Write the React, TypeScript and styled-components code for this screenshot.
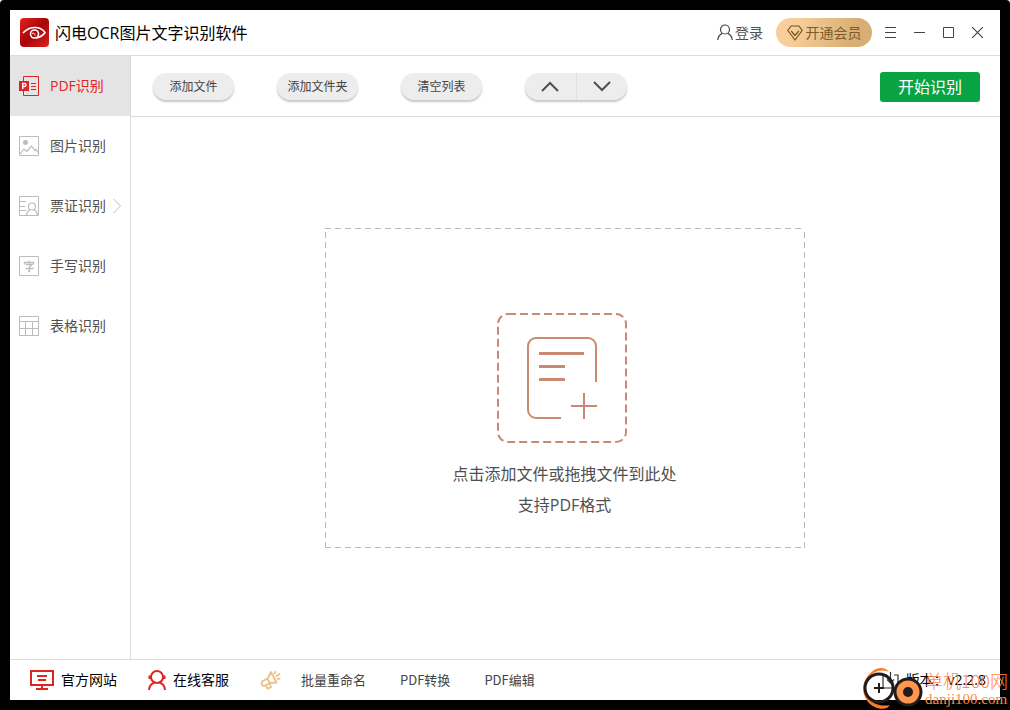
import React from "react";
import styled, { createGlobalStyle } from "styled-components";

const GlobalStyle = createGlobalStyle`
  *, *::before, *::after { box-sizing: border-box; }
  body { margin: 0; background: #fff; }
  body, button {
    font-family: "Open Sans", "Noto Sans CJK SC", sans-serif;
    font-weight: 400;
  }
  button {
    margin: 0; padding: 0; border: 0; background: none; color: inherit; cursor: pointer;
  }
  svg { display: block; flex: none; }
`;

const Frame = styled.div`
  display: flex;
  min-height: 100vh;
  padding: 10px;
  background: #000;
  border-radius: 4px 4px 0 0;
`;

const AppWindow = styled.div`
  position: relative;
  display: flex;
  flex: 1;
  flex-direction: column;
  background: #fff;
`;

const TitleBar = styled.header`
  display: flex;
  align-items: center;
  height: 46px;
  padding: 0 14px 0 10px;
  border-bottom: 1px solid #dcdcdc;
`;

const Title = styled.h1`
  flex: 1;
  margin: 0 0 0 6px;
  color: #000;
  font-size: 16px;
  font-weight: 400;
  line-height: 24px;
`;

const LoginButton = styled.button`
  display: flex;
  align-items: center;
  gap: 2px;
  color: #505050;
  font-size: 14px;
  line-height: 20px;
`;

const VipButton = styled.button`
  display: flex;
  align-items: center;
  justify-content: center;
  gap: 3px;
  width: 96px;
  height: 29px;
  margin: 0 10px 0 13px;
  border-radius: 15px;
  background: linear-gradient(110deg, #f8cf9b 20%, #d8ae74 80%);
  color: #7d5a29;
  font-size: 14px;
  line-height: 20px;
`;

const WindowControls = styled.div`
  display: flex;
  gap: 12px;
`;

const ControlButton = styled.button`
  display: flex;
  align-items: center;
  justify-content: center;
  width: 17px;
  height: 20px;
  color: #444;
`;

const Body = styled.div`
  display: flex;
  flex: 1;
`;

const Sidebar = styled.nav`
  width: 121px;
  border-right: 1px solid #dcdcdc;
`;

const NavItem = styled.button<{ $active?: boolean }>`
  display: flex;
  align-items: center;
  width: 100%;
  height: 60px;
  padding-left: 8px;
  background: ${(p) => (p.$active ? "#e4e4e4" : "transparent")};
  color: ${(p) => (p.$active ? "#e02420" : "#505050")};
  font-size: 14px;
  line-height: 20px;
`;

const NavLabel = styled.span`
  margin: 0 7px 0 10px;
  white-space: nowrap;
`;

const Content = styled.div`
  display: flex;
  flex: 1;
  flex-direction: column;
`;

const Toolbar = styled.div`
  display: flex;
  align-items: center;
  gap: 43px;
  height: 61px;
  padding: 1px 20px 0 22px;
  border-bottom: 1px solid #dcdcdc;
`;

const PillButton = styled.button`
  width: 81px;
  height: 27px;
  border-radius: 14px;
  background: #ededed;
  box-shadow: 0 2px 2px rgba(0, 0, 0, 0.22);
  color: #444;
  font-size: 12px;
  line-height: 18px;
`;

const OrderGroup = styled.div`
  display: flex;
  width: 102px;
  height: 27px;
  border-radius: 14px;
  background: #ededed;
  box-shadow: 0 2px 2px rgba(0, 0, 0, 0.22);
`;

const OrderButton = styled.button`
  display: flex;
  flex: 1;
  align-items: center;
  justify-content: center;

  & + & { border-left: 1px solid #e0e0e0; }
`;

const StartButton = styled.button`
  width: 100px;
  height: 30px;
  margin-left: auto;
  border-radius: 3px;
  background: #0aa344;
  color: #fff;
  font-size: 16px;
  line-height: 24px;
`;

const Workspace = styled.main`
  display: flex;
  flex: 1;
  align-items: center;
  justify-content: center;
  padding-right: 2px;
`;

const DropZone = styled.button`
  display: flex;
  flex-direction: column;
  align-items: center;
  width: 480px;
  height: 320px;
  padding-top: 85px;
  background:
    repeating-linear-gradient(90deg, #b9b9b9 0 6px, transparent 6px 10px) top / 100% 1px no-repeat,
    repeating-linear-gradient(90deg, #b9b9b9 0 6px, transparent 6px 10px) bottom / 100% 1px no-repeat,
    repeating-linear-gradient(180deg, transparent 0 4px, #b9b9b9 4px 10px) left / 1px 100% no-repeat,
    repeating-linear-gradient(180deg, transparent 0 4px, #b9b9b9 4px 10px) right / 1px 100% no-repeat;
  color: #505050;
  font-size: 16px;
  line-height: 31px;
`;

const DropHint = styled.span`
  margin-top: 16px;
`;

const Footer = styled.footer`
  display: flex;
  align-items: center;
  height: 41px;
  padding: 0 14px 0 20px;
  border-top: 1px solid #dcdcdc;
`;

const FooterLink = styled.a`
  display: flex;
  align-items: center;
  gap: 7px;
  margin-right: 31px;
  color: #000;
  font-size: 14px;
  line-height: 20px;
  text-decoration: none;
`;

const Promo = styled.div`
  display: flex;
  align-items: center;
  gap: 34px;
  margin-left: 20px;
  color: #444;
  font-family: "Noto Sans CJK SC", sans-serif;
  font-size: 13px;
  line-height: 20px;
`;

const PromoLink = styled.a`
  color: inherit;
  text-decoration: none;
`;

const Version = styled.div`
  display: flex;
  align-items: center;
  gap: 7px;
  margin-left: auto;
  color: #000;
  font-size: 14px;
  line-height: 20px;
`;

const Watermark = styled.div`
  position: absolute;
  right: -8px;
  bottom: -10px;
  display: flex;
  align-items: center;
  gap: 1px;
  color: #ff8a45;
  pointer-events: none;
`;

const WatermarkText = styled.div`
  font-family: "Noto Sans CJK SC", sans-serif;
  font-size: 18px;
  font-weight: 300;
  line-height: 20px;
`;

const WatermarkSite = styled.div`
  font-family: "Liberation Serif", serif;
  font-size: 15px;
  line-height: 18px;
`;

const LogoIcon = () => (
  <svg width="29" height="29" viewBox="0 0 29 29" fill="none">
    <defs>
      <linearGradient id="logo" x1="0" y1="0" x2="1" y2="1">
        <stop offset="0" stopColor="#e22422" />
        <stop offset=".5" stopColor="#a90508" />
        <stop offset="1" stopColor="#dc2220" />
      </linearGradient>
    </defs>
    <rect width="29" height="29" rx="4" fill="url(#logo)" />
    <path d="M3.500 14.500C7 10.800 11 9.500 15 9.500c4.500 0 8 2.300 10 5-1.800 2.800-5 4.800-8.500 5.300" stroke="#fff" strokeWidth="1.700" strokeLinecap="round" />
    <circle cx="14.500" cy="16" r="4" stroke="#fff" strokeWidth="1.600" />
    <path d="M12 15.500c1.800-.8 3.200.2 3 2" stroke="#fff" />
  </svg>
);

const UserIcon = () => (
  <svg width="16" height="17" viewBox="0 0 16 17" fill="none" stroke="#444" strokeWidth="1.200">
    <circle cx="8" cy="5.500" r="4.500" />
    <path d="M.8 16c.2-3.500 2-5.500 4.500-6.600M15.200 16c-.2-3.500-2-5.500-4.500-6.600" />
  </svg>
);

const DiamondIcon = () => (
  <svg width="16" height="16" viewBox="0 0 16 16" fill="none" stroke="#74501f" strokeWidth="1.200" strokeLinejoin="round">
    <path d="M4 1h8l3.200 4.500L8 15 .8 5.500z" />
    <path d="m4.200 6 3.800 4.500L11.800 6" />
  </svg>
);

const MenuIcon = () => (
  <svg width="11" height="11" viewBox="0 0 11 11" stroke="currentColor">
    <path d="M0 .5h11M0 5.500h11M0 10.500h11" />
  </svg>
);

const MinimizeIcon = () => (
  <svg width="11" height="11" viewBox="0 0 11 11" stroke="currentColor">
    <path d="M0 5.500h11" />
  </svg>
);

const MaximizeIcon = () => (
  <svg width="11" height="11" viewBox="0 0 11 11" fill="none" stroke="currentColor">
    <path d="M.5.5h10v10H.5z" />
  </svg>
);

const CloseIcon = () => (
  <svg width="11" height="11" viewBox="0 0 11 11" stroke="currentColor" strokeWidth="1.200">
    <path d="m0 0 11 11M11 0 0 11" />
  </svg>
);

const PdfIcon = () => (
  <svg width="22" height="20" viewBox="0 0 22 20" fill="none" stroke="#e02420">
    <path d="M5.500 5V.5h15v19h-15V15M13 7.500h5M13 10.500h5M13 13.500h5" />
    <path d="M1 5h10v10H1z" fill="#e02420" stroke="none" />
    <path d="M4.700 13V7.500h1.800a1.400 1.400 0 0 1 0 3H4.700" stroke="#fff" strokeWidth="1.400" />
  </svg>
);

const PictureIcon = () => (
  <svg width="22" height="20" viewBox="0 0 22 20" fill="none" stroke="#bcbcbc">
    <path d="M1.500.5h19v19h-19z" />
    <circle cx="7.500" cy="6.500" r="2.500" fill="#bcbcbc" stroke="none" />
    <path d="m2 18 4-5 3 2.500 4.500-5.500 3.500 4.500 1-1 3 4" strokeWidth="1.200" />
  </svg>
);

const TicketIcon = () => (
  <svg width="22" height="20" viewBox="0 0 22 20" fill="none" stroke="#bcbcbc">
    <path d="M1.500.5h19v19h-19zM2 5.500h6M2 10.500h5M2 14.500h6" />
    <circle cx="14" cy="10.500" r="3.500" strokeWidth="1.200" />
    <path d="M8.500 19c.3-3 1.800-4.500 3.500-5.300M19.500 19c-.3-3-1.800-4.500-3.500-5.300" strokeWidth="1.200" />
  </svg>
);

const HandwritingIcon = () => (
  <svg width="22" height="20" viewBox="0 0 22 20" fill="none" stroke="#bcbcbc">
    <path d="M1.500.5h19v19h-19z" />
    <path d="M6.500 8.500V6.500h9v2M11 4.500v2M8 8.500h6L11.500 11v4.500H10M7.500 12.500h8" strokeWidth="1.300" />
  </svg>
);

const TableIcon = () => (
  <svg width="22" height="20" viewBox="0 0 22 20" fill="none" stroke="#bcbcbc">
    <path d="M1.500.5h19v19h-19zM2 5.500h19M2 12.500h19M7.500 5.500V20M14.500 5.500V20" />
  </svg>
);

const ChevronRightIcon = () => (
  <svg width="9" height="16" viewBox="0 0 9 16" fill="none" stroke="#bcbcbc">
    <path d="m.5 1 7 7-7 7" />
  </svg>
);

const ChevronIcon = ({ down }: { down?: boolean }) => (
  <svg width="18" height="11" viewBox="0 0 18 11" fill="none" stroke="#505050" strokeWidth="2">
    <path d={down ? "m1 1 8 8 8-8" : "m1 10 8-8 8 8"} />
  </svg>
);

const AddFileIcon = () => (
  <svg width="136" height="130" viewBox="0 0 136 130" fill="none" stroke="#c98a71" strokeWidth="2">
    <rect x="1" y="1" width="128" height="128" rx="10" strokeDasharray="8 4" />
    <path d="M99 69V33a8 8 0 0 0-8-8H39a8 8 0 0 0-8 8v64a8 8 0 0 0 8 8h25" />
    <path d="M42 40.500h45M42 53.500h26M42 66.500h26" strokeWidth="3" />
    <path d="M74 93h26M87 80v26" />
  </svg>
);

const MonitorIcon = () => (
  <svg width="24" height="20" viewBox="0 0 24 20" fill="none" stroke="#e02420" strokeWidth="2">
    <path d="M1 1h22v14H1zM12 15v4M6 19h12M7 6h10M8 10h8" />
  </svg>
);

const SupportIcon = () => (
  <svg width="18" height="20" viewBox="0 0 18 20" fill="none" stroke="#e02420" strokeWidth="2">
    <circle cx="9" cy="7" r="6" />
    <path d="M1 20c.3-4 2.500-6.500 5.500-7.500M17 20c-.3-4-2.500-6.500-5.500-7.500" />
    <path d="M2 5.500v3.500M16 5.500v3.500" strokeWidth="3" />
  </svg>
);

const MegaphoneIcon = () => (
  <svg width="21" height="20" viewBox="0 0 21 20" fill="none" stroke="#ecc08a" strokeWidth="1.800" strokeLinejoin="round" strokeLinecap="round">
    <path d="M11 2 16.500 12.500 10 13l-5.500 2.800c-2 .8-4-2.800-2.300-4.300L8 8z" />
    <path d="m7.500 9 2.500 4.500M6 15.500l1.500 3.200 3.500-1.500-1.500-3.500M14.500 3.500l1-1.800M16.500 6l3-2M17.500 8.500l2.200.3" />
  </svg>
);

const UpdateIcon = () => (
  <svg width="17" height="17" viewBox="0 0 17 17" fill="none" stroke="#333" strokeWidth="1.200">
    <path d="M5 3H1v13h15V3h-4M8.500 0v11M5 7.500l3.500 3.500L12 7.500" />
  </svg>
);

const WatermarkIcon = () => (
  <svg width="62" height="43" viewBox="0 0 62 43" fill="none">
    <path d="M27 5C23-.5 15 0 9 5.500 0 13-1.500 26 6 35c5 6 13 8 19 6l3-3c-9 2-18-1-22-8C1 21 4 11 12 6c5-3 10-3 15-1z" fill="#ff7a24" />
    <circle cx="17" cy="21" r="14" stroke="#211c1b" strokeWidth="3" />
    <path d="M17 16v10M12 21h10" stroke="#211c1b" strokeWidth="2" />
    <circle cx="46" cy="25" r="13" fill="#ff9650" stroke="#211c1b" strokeWidth="3" />
    <circle cx="46" cy="25" r="5" fill="#211c1b" />
  </svg>
);

const navItems = [
  { label: "PDF识别", Icon: PdfIcon, active: true },
  { label: "图片识别", Icon: PictureIcon },
  { label: "票证识别", Icon: TicketIcon, expandable: true },
  { label: "手写识别", Icon: HandwritingIcon },
  { label: "表格识别", Icon: TableIcon },
];

export default function App() {
  return (
    <>
      <GlobalStyle />
      <Frame>
        <AppWindow>
          <TitleBar>
            <LogoIcon />
            <Title>闪电OCR图片文字识别软件</Title>
            <LoginButton><UserIcon />登录</LoginButton>
            <VipButton><DiamondIcon />开通会员</VipButton>
            <WindowControls>
              <ControlButton aria-label="菜单"><MenuIcon /></ControlButton>
              <ControlButton aria-label="最小化"><MinimizeIcon /></ControlButton>
              <ControlButton aria-label="最大化"><MaximizeIcon /></ControlButton>
              <ControlButton aria-label="关闭"><CloseIcon /></ControlButton>
            </WindowControls>
          </TitleBar>
          <Body>
            <Sidebar>
              {navItems.map(({ label, Icon, active, expandable }) => (
                <NavItem key={label} $active={active}>
                  <Icon />
                  <NavLabel>{label}</NavLabel>
                  {expandable && <ChevronRightIcon />}
                </NavItem>
              ))}
            </Sidebar>
            <Content>
              <Toolbar>
                <PillButton>添加文件</PillButton>
                <PillButton>添加文件夹</PillButton>
                <PillButton>清空列表</PillButton>
                <OrderGroup>
                  <OrderButton aria-label="上移"><ChevronIcon /></OrderButton>
                  <OrderButton aria-label="下移"><ChevronIcon down /></OrderButton>
                </OrderGroup>
                <StartButton>开始识别</StartButton>
              </Toolbar>
              <Workspace>
                <DropZone>
                  <AddFileIcon />
                  <DropHint>点击添加文件或拖拽文件到此处</DropHint>
                  <span>支持PDF格式</span>
                </DropZone>
              </Workspace>
            </Content>
          </Body>
          <Footer>
            <FooterLink href="#site"><MonitorIcon />官方网站</FooterLink>
            <FooterLink href="#support"><SupportIcon />在线客服</FooterLink>
            <MegaphoneIcon />
            <Promo>
              <PromoLink href="#rename">批量重命名</PromoLink>
              <PromoLink href="#convert">PDF转换</PromoLink>
              <PromoLink href="#edit">PDF编辑</PromoLink>
            </Promo>
            <Version><UpdateIcon />版本：v2.2.8</Version>
          </Footer>
          <Watermark>
            <WatermarkIcon />
            <div>
              <WatermarkText>单机100网</WatermarkText>
              <WatermarkSite>danji100.com</WatermarkSite>
            </div>
          </Watermark>
        </AppWindow>
      </Frame>
    </>
  );
}
